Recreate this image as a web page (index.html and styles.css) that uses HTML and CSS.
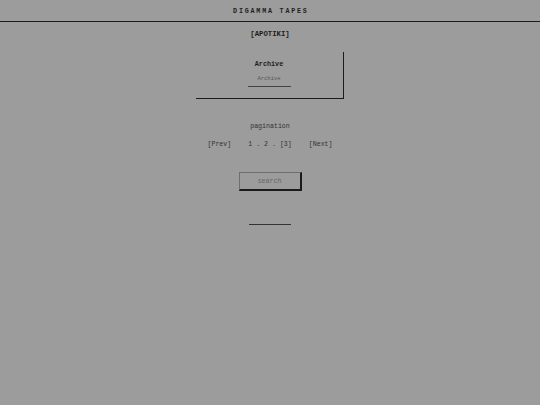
FILE: index.html
```html
<!DOCTYPE html>
<html>
<head>
<meta charset="utf-8">
<link rel="stylesheet" href="styles.css">
</head>
<body>
<header class="topbar"><span class="brand">DIGAMMA TAPES</span></header>
<main class="main">
  <div class="section-title">[APOTIKI]</div>
  <div class="card">
    <div class="card-title">Archive</div>
    <div class="card-link">Archive</div>
  </div>
  <div class="pag-label">pagination</div>
  <div class="pager">
    <span>[Prev]</span>
    <span>1 . 2 . [3]</span>
    <span>[Next]</span>
  </div>
  <button class="search">search</button>
  <div class="rule"></div>
</main>
</body>
</html>
```
FILE: styles.css
```css
html, body {
  margin: 0;
  padding: 0;
  background: #9c9c9c;
  font-family: "Liberation Mono", "DejaVu Sans Mono", monospace;
  color: #1e1e1e;
}
.topbar {
  height: 21px;
  border-bottom: 1px solid #1a1a1a;
  display: flex;
  align-items: center;
  justify-content: center;
}
.brand {
  font-size: 6.7px;
  font-weight: bold;
  letter-spacing: 1.8px;
  margin-right: -1.8px;
}
.main {
  display: flex;
  flex-direction: column;
  align-items: center;
}
.section-title {
  margin-top: 8px;
  font-size: 7.3px;
  font-weight: bold;
  line-height: 8px;
}
.card {
  margin-top: 14px;
  width: 148px;
  height: 47px;
  border-right: 1px solid #1a1a1a;
  border-bottom: 1px solid #1a1a1a;
  display: flex;
  flex-direction: column;
  align-items: center;
  box-sizing: border-box;
  padding-top: 8px;
  margin-left: -1px;
}
.card-title {
  font-size: 6.8px;
  font-weight: bold;
  line-height: 8px;
}
.card-link {
  margin-top: 7px;
  font-size: 5.5px;
  color: #555;
  width: 43px;
  text-align: center;
  border-bottom: 1px solid #444;
  line-height: 8px;
  padding-bottom: 3px;
}
.pag-label {
  margin-top: 24px;
  font-size: 6.6px;
  color: #333;
  line-height: 8px;
}
.pager {
  margin-top: 10px;
  display: flex;
  gap: 17px;
  font-size: 6.6px;
  color: #333;
  line-height: 8px;
}
.search {
  margin-top: 23px;
  width: 63px;
  height: 19px;
  box-sizing: border-box;
  background: #9c9c9c;
  border: 1px solid #6e6e6e;
  border-right: 2px solid #1a1a1a;
  border-bottom: 2px solid #1a1a1a;
  font-family: "Liberation Mono", monospace;
  font-size: 6.6px;
  color: #666;
  padding: 0;
}
.rule {
  margin-top: 33px;
  width: 42px;
  border-top: 1px solid #333;
}
```
